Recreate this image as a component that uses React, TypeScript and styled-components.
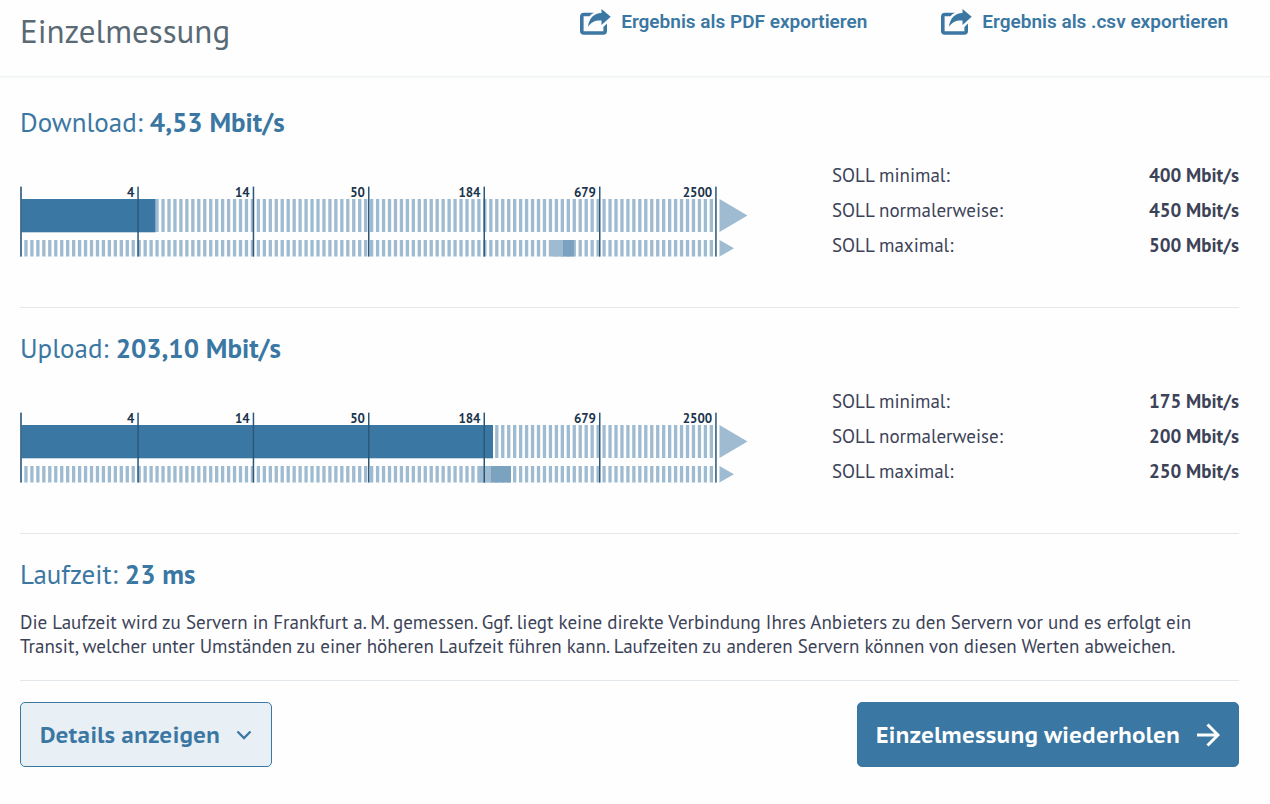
import React from "react";
import styled, { createGlobalStyle } from "styled-components";

const blue = "#3b77a3";
const ink = "#3c4358";

const GlobalStyle = createGlobalStyle`
  *, *::before, *::after { box-sizing: border-box; }
  body {
    margin: 0;
    background: #fefefe;
    color: ${ink};
    font-family: "PT Sans", "Noto Sans", sans-serif;
  }
`;

const Header = styled.header`
  display: flex;
  justify-content: space-between;
  align-items: flex-start;
  padding: 8px 42px 22px 20px;
  background: #fefefe;
  border-bottom: 1px solid #edf1f1;
  box-shadow: 0 1px 2px #f3f6f6;
`;

const PageTitle = styled.h1`
  margin: 0;
  font-size: 33px;
  line-height: 46px;
  font-weight: 400;
  color: #596a75;
`;

const ExportLinks = styled.nav`
  display: flex;
  gap: 74px;
`;

const ExportLink = styled.a`
  display: flex;
  align-items: center;
  gap: 10px;
  height: 28px;
  color: ${blue};
  font-family: Roboto, sans-serif;
  font-size: 19px;
  line-height: 24px;
  font-weight: 600;
  text-decoration: none;
`;

const Main = styled.main`
  padding: 5px 31px 36px 20px;
`;

const Section = styled.section`
  padding: 20px 0 44px;
  border-bottom: 1px solid #e2e8ec;
`;

const RuntimeSection = styled(Section)`
  padding-bottom: 22px;
`;

const Heading = styled.h2`
  margin: 0;
  font-size: 27px;
  line-height: 40px;
  font-weight: 400;
  color: ${blue};
`;

const Measurement = styled.div`
  display: grid;
  grid-template-columns: 728fr 407fr;
  column-gap: 84px;
  padding-top: 16px;
`;

const Chart = styled.svg`
  display: block;
  width: 100%;
  height: auto;
  margin-top: 20px;
`;

const TargetTable = styled.table`
  width: 100%;
  height: 105px;
  border-collapse: collapse;
  font-size: 19px;
  line-height: 35px;

  th, td { padding: 0; }
  th { text-align: left; font-weight: 400; }
  td { text-align: right; font-weight: 700; }
`;

const Note = styled.p`
  margin: 16px 0 0;
  font-size: 19px;
  line-height: 24px;
`;

const Actions = styled.div`
  display: flex;
  justify-content: space-between;
  padding-top: 21px;
`;

const Button = styled.button<{ $primary?: boolean }>`
  display: flex;
  align-items: center;
  gap: 16px;
  height: 65px;
  padding: 0 ${(p) => (p.$primary ? "18px" : "19px")};
  border: 1px solid ${blue};
  border-radius: 5px;
  background: ${(p) => (p.$primary ? blue : "#e8eff5")};
  color: ${(p) => (p.$primary ? "#fff" : blue)};
  font-family: "PT Sans Caption", "PT Sans", "Noto Sans", sans-serif;
  font-size: 22px;
  font-weight: 700;
  cursor: pointer;
`;

const ShareIcon = () => (
  <svg width="31" height="26" viewBox="0 0 31 26" fill={blue} aria-hidden="true">
    <path d="M4 3.7H14Q11 5 9.500 7.200H3.600V22.200H23.400V18L27 14.500V22Q27 25.700 23.300 25.700H3.700Q0 25.700 0 22V7.700Q0 3.700 4 3.700Z" />
    <path d="M21.500 0L30.700 7.800L21.500 16V11.600C15.500 11.200 11.500 12.800 8 17.800C8.800 9.500 14 4.200 21.500 4Z" />
  </svg>
);

const ticks = [
  { x: 117.3, label: "4" },
  { x: 232.7, label: "14" },
  { x: 348, label: "50" },
  { x: 463.5, label: "184" },
  { x: 579, label: "679" },
  { x: 695.2, label: "2500" },
];

type ScaleProps = { name: string; value: number; range: [number, number, number] };

const Scale = ({ name, value, range }: ScaleProps) => (
  <Chart viewBox="0 -8 728 84" role="img" aria-label={name}>
    <g stroke="#9fbbd1" strokeDasharray="3.3 2.66">
      <path d="M4.300 29.500H694" strokeWidth="33" />
      <path d="M4.300 62.300H694" strokeWidth="16.600" />
    </g>
    <rect x="1.5" y="13" width={value} height="33.3" fill={blue} />
    <rect x={range[0]} y="54" width={range[1] - range[0]} height="16.600" fill="#9fbbd1" />
    <rect x={range[1]} y="54" width={range[2] - range[1]} height="16.600" fill="#7ba3c0" />
    <path d="M699.500 13L727.500 29.500L699.500 46ZM699.500 54L714 62.300L699.500 70.600Z" fill="#9fbbd1" />
    <rect x="0.2" y="0.6" width="1.6" height="70" fill="#2b5879" />
    {ticks.map((t) => (
      <g key={t.label}>
        <rect x={t.x} y="0.6" width="1.5" height="70" fill="#2b5879" />
        <text x={t.x - 3} y="11" textAnchor="end" fontSize="13" fontWeight="700" fill="#19344c">
          {t.label}
        </text>
      </g>
    ))}
  </Chart>
);

type ResultProps = ScaleProps & { speed: string; targets: string[] };
const labels = ["minimal", "normalerweise", "maximal"];

const Result = ({ speed, targets, ...scale }: ResultProps) => (
  <Section>
    <Heading>
      {scale.name}: <b>{speed}</b>
    </Heading>
    <Measurement>
      <Scale {...scale} />
      <TargetTable>
        <tbody>
          {targets.map((t, i) => (
            <tr key={labels[i]}>
              <th scope="row">SOLL {labels[i]}:</th>
              <td>{t} Mbit/s</td>
            </tr>
          ))}
        </tbody>
      </TargetTable>
    </Measurement>
  </Section>
);

export default function App() {
  return (
    <>
      <GlobalStyle />
      <Header>
        <PageTitle>Einzelmessung</PageTitle>
        <ExportLinks aria-label="Export">
          <ExportLink href="#pdf"><ShareIcon />Ergebnis als PDF exportieren</ExportLink>
          <ExportLink href="#csv"><ShareIcon />Ergebnis als .csv exportieren</ExportLink>
        </ExportLinks>
      </Header>
      <Main>
        <Result name="Download" speed="4,53 Mbit/s" value={134} range={[532, 543, 554]} targets={["400", "450", "500"]} />
        <Result name="Upload" speed="203,10 Mbit/s" value={471.5} range={[458, 471, 491]} targets={["175", "200", "250"]} />
        <RuntimeSection>
          <Heading>Laufzeit: <b>23 ms</b></Heading>
          <Note>
            Die Laufzeit wird zu Servern in Frankfurt a. M. gemessen. Ggf. liegt keine direkte Verbindung Ihres Anbieters zu den Servern vor und es erfolgt ein
            Transit, welcher unter Umständen zu einer höheren Laufzeit führen kann. Laufzeiten zu anderen Servern können von diesen Werten abweichen.
          </Note>
        </RuntimeSection>
        <Actions>
          <Button type="button">
            Details anzeigen
            <svg width="16" height="10" viewBox="0 0 16 10" fill="none" stroke="currentColor" strokeWidth="2.3" aria-hidden="true">
              <path d="M1.500 1.500L8 8L14.500 1.500" />
            </svg>
          </Button>
          <Button type="button" $primary>
            Einzelmessung wiederholen
            <svg width="24" height="24" viewBox="0 0 24 24" fill="none" stroke="currentColor" strokeWidth="3" aria-hidden="true">
              <path d="M1 12H22M11.500 1.500L22 12L11.500 22.500" />
            </svg>
          </Button>
        </Actions>
      </Main>
    </>
  );
}
